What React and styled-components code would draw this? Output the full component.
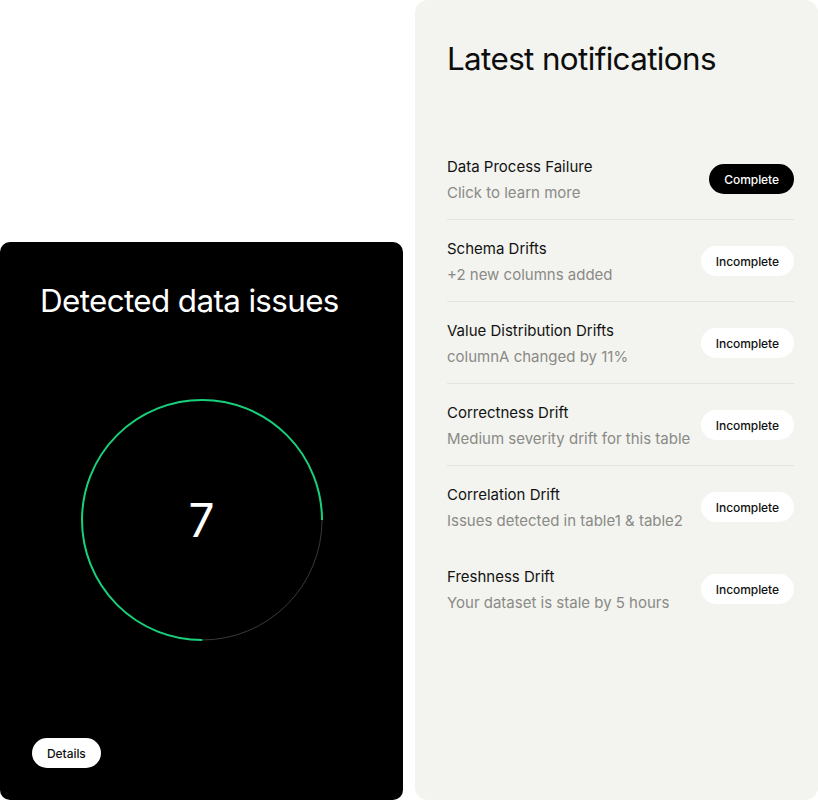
import React from "react";
import styled, { createGlobalStyle } from "styled-components";

const Global = createGlobalStyle`
  html, body { margin: 0; padding: 0; background: #ffffff; }
  body { font-family: Inter, "Noto Sans", sans-serif; -webkit-font-smoothing: antialiased; }
  * { box-sizing: border-box; }
`;

const Page = styled.div`
  width: 818px;
  height: 800px;
  display: flex;
  gap: 12px;
  align-items: flex-end;
`;

const IssuesCard = styled.section`
  width: 403px;
  height: 558px;
  background: #000;
  border-radius: 10px;
  display: flex;
  flex-direction: column;
  padding: 41px 32px 32px 40px;
`;

const CardTitle = styled.h2`
  margin: 0;
  font-size: 31.4px;
  line-height: 36px;
  font-weight: 400;
  letter-spacing: -0.02em;
  color: ${(p) => (p.$dark ? "#ffffff" : "#0d0d0d")};
`;

const Gauge = styled.div`
  display: grid;
  place-items: center;
  margin: 79px 0 0 -40px;
  width: 403px;
  & > * { grid-area: 1 / 1; }
`;

const GaugeValue = styled.span`
  font-size: 46px;
  font-weight: 400;
  color: #fff;
  line-height: 1;
`;

const Pill = styled.button`
  height: 30px;
  padding: 0 15px;
  border: none;
  border-radius: 15px;
  font-family: Inter, sans-serif;
  font-size: 12px;
  font-weight: 500;
  letter-spacing: -0.005em;
  background: ${(p) => (p.$filled ? "#000" : "#fff")};
  color: ${(p) => (p.$filled ? "#fff" : "#111")};
  cursor: pointer;
  flex-shrink: 0;
`;

const DetailsButton = styled(Pill)`
  margin-top: auto;
  margin-left: -8px;
  align-self: flex-start;
`;

const NotificationsPanel = styled.section`
  width: 403px;
  height: 800px;
  background: #f3f4ef;
  border-radius: 13px;
  padding: 41px 24px 0 32px;
  display: flex;
  flex-direction: column;
`;

const List = styled.ul`
  list-style: none;
  margin: 61px 0 0;
  padding: 0;
`;

const Row = styled.li`
  display: flex;
  align-items: center;
  justify-content: space-between;
  padding: 18px 0 17px;
  border-bottom: 1px solid ${(p) => (p.$divider ? "#e4e4df" : "transparent")};
`;

const RowText = styled.div`
  display: flex;
  flex-direction: column;
  gap: 6px;
  margin: 1px 0 -1px;
`;

const RowTitle = styled.span`
  font-size: 15px;
  line-height: 20px;
  color: #121212;
`;

const RowSub = styled.span`
  font-size: 15px;
  line-height: 20px;
  color: #8a8a86;
`;

const items = [
  ["Data Process Failure", "Click to learn more", true],
  ["Schema Drifts", "+2 new columns added", false],
  ["Value Distribution Drifts", "columnA changed by 11%", false],
  ["Correctness Drift", "Medium severity drift for this table", false],
  ["Correlation Drift", "Issues detected in table1 & table2", false],
  ["Freshness Drift", "Your dataset is stale by 5 hours", false],
];

function Ring() {
  const r = 120;
  const c = 2 * Math.PI * r;
  return (
    <svg width="244" height="244" viewBox="0 0 244 244">
      <circle cx="122" cy="122" r={r} fill="none" stroke="#3a3a3a" strokeWidth="1" />
      <circle
        cx="122"
        cy="122"
        r={r}
        fill="none"
        stroke="#17d07a"
        strokeWidth="2"
        strokeDasharray={`${c * 0.75} ${c}`}
        transform="translate(0 244) scale(1 -1)"
      />
    </svg>
  );
}

export default function App() {
  return (
    <>
      <Global />
      <Page>
        <IssuesCard>
          <CardTitle $dark>Detected data issues</CardTitle>
          <Gauge>
            <Ring />
            <GaugeValue>7</GaugeValue>
          </Gauge>
          <DetailsButton>Details</DetailsButton>
        </IssuesCard>
        <NotificationsPanel>
          <CardTitle>Latest notifications</CardTitle>
          <List>
            {items.map(([t, s, done], i) => (
              <Row key={t} $divider={i < 4}>
                <RowText>
                  <RowTitle>{t}</RowTitle>
                  <RowSub>{s}</RowSub>
                </RowText>
                <Pill $filled={done}>{done ? "Complete" : "Incomplete"}</Pill>
              </Row>
            ))}
          </List>
        </NotificationsPanel>
      </Page>
    </>
  );
}
